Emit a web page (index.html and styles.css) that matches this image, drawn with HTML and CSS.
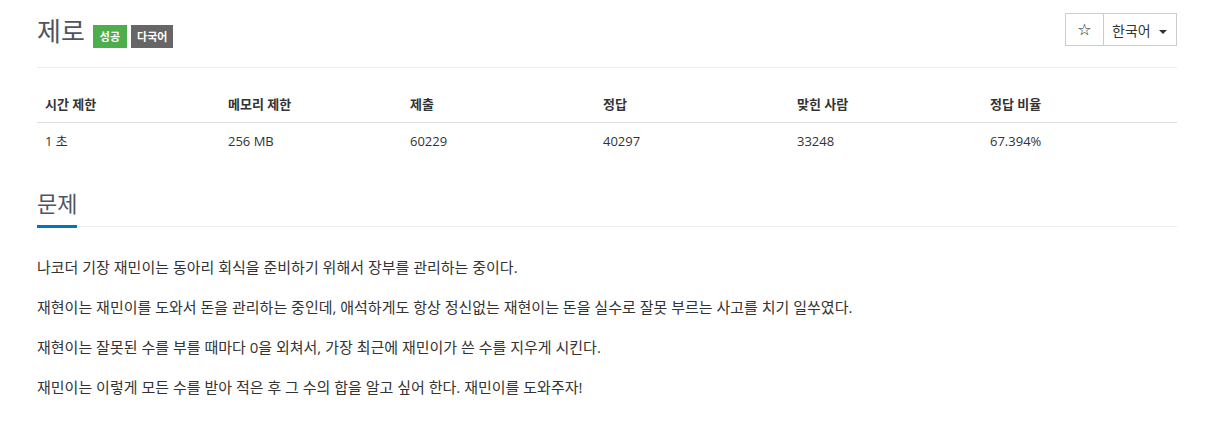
FILE: index.html
```html
<!DOCTYPE html>
<html lang="ko">
<head>
    <meta charset="UTF-8">
    <title>제로</title>
    <link rel="stylesheet" href="styles.css">
</head>
<body>
    <div class="container">
        <!-- 제목 -->
        <div class="page-header">
            <div class="title">
                <h1>제로</h1>
                <span class="label label-ac">성공</span>
                <span class="label label-lang">다국어</span>
            </div>
            <div class="btn-group">
                <button class="btn btn-star">☆</button>
                <button class="btn btn-lang">한국어 <span class="caret"></span></button>
            </div>
        </div>

        <!-- 문제 정보 -->
        <table class="info">
            <thead>
                <tr>
                    <th class="c1">시간 제한</th>
                    <th class="c2">메모리 제한</th>
                    <th class="c3">제출</th>
                    <th class="c4">정답</th>
                    <th class="c5">맞힌 사람</th>
                    <th class="c6">정답 비율</th>
                </tr>
            </thead>
            <tbody>
                <tr>
                    <td>1 초</td>
                    <td>256 MB</td>
                    <td>60229</td>
                    <td>40297</td>
                    <td>33248</td>
                    <td>67.394%</td>
                </tr>
            </tbody>
        </table>

        <!-- 문제 -->
        <section class="problem">
            <div class="headline">
                <h2>문제</h2>
            </div>
            <div class="description">
                <p>나코더 기장 재민이는 동아리 회식을 준비하기 위해서 장부를 관리하는 중이다.</p>
                <p>재현이는 재민이를 도와서 돈을 관리하는 중인데, 애석하게도 항상 정신없는 재현이는 돈을 실수로 잘못 부르는 사고를 치기 일쑤였다.</p>
                <p>재현이는 잘못된 수를 부를 때마다 0을 외쳐서, 가장 최근에 재민이가 쓴 수를 지우게 시킨다.</p>
                <p>재민이는 이렇게 모든 수를 받아 적은 후 그 수의 합을 알고 싶어 한다. 재민이를 도와주자!</p>
            </div>
        </section>
    </div>
</body>
</html>
```

FILE: styles.css
```css
/* 기본 */
body {
    margin: 0;
    padding: 0;
    font-family: "Open Sans", "Noto Sans CJK KR", sans-serif;
    font-size: 14px;
    color: #333;
    background-color: #fff;
}

.container {
    width: 1140px;
    margin-left: 37px;
}

/* 제목 영역 */
.page-header {
    display: flex;
    justify-content: space-between;
    align-items: flex-start;
    padding-top: 13px;
    height: 54px;
    border-bottom: 1px solid #eee;
}

.title {
    display: flex;
    align-items: flex-start;
}

.title h1 {
    margin: 0 4px 0 0;
    font-size: 26px;
    font-weight: 400;
    line-height: 36px;
    color: #4f5560;
}

.label {
    margin-top: 12px;
    margin-left: 4px;
    padding: 0 7px;
    height: 23px;
    line-height: 23px;
    font-size: 11px;
    font-weight: 700;
    color: #fff;
}

.label-ac {
    background-color: #4cae4c;
}

.label-lang {
    background-color: #666;
    padding: 0 6px;
}

/* 버튼 */
.btn-group {
    display: flex;
}

.btn {
    height: 33px;
    margin: 0;
    border: 1px solid #ccc;
    background-color: #fff;
    color: #333;
    font-family: inherit;
    font-size: 14px;
    padding: 0;
    cursor: pointer;
}

.btn-star {
    width: 39px;
    font-family: "DejaVu Sans", sans-serif;
    font-size: 16px;
    font-weight: 700;
    color: #222;
}

.btn-lang {
    width: 74px;
    margin-left: -1px;
    padding-left: 8px;
    text-align: left;
}

.caret {
    display: inline-block;
    margin-left: 5px;
    width: 0;
    height: 0;
    vertical-align: middle;
    border-top: 4px solid #333;
    border-left: 4px solid transparent;
    border-right: 4px solid transparent;
}

/* 정보 표 */
.info {
    width: 100%;
    margin-top: 18px;
    border-collapse: collapse;
    font-size: 13px;
}

.info th,
.info td {
    padding: 8px;
    line-height: 20px;
    text-align: left;
}

.info th {
    font-weight: 700;
    border-bottom: 1px solid #ddd;
}

.info .c1 { width: 167px; }
.info .c2 { width: 166px; }
.info .c3 { width: 177px; }
.info .c4 { width: 178px; }
.info .c5 { width: 177px; }

/* 문제 */
.headline {
    margin-top: 31px;
    border-bottom: 1px solid #eee;
}

.headline h2 {
    display: inline-block;
    margin: 0 0 -2px 0;
    padding-bottom: 9px;
    font-size: 22px;
    font-weight: 400;
    line-height: 26px;
    color: #4f5560;
    border-bottom: 3px solid #0076c0;
}

.description {
    margin-top: 25px;
}

.description p {
    margin: 0 0 10px 0;
    font-size: 15px;
    line-height: 30px;
}
```
